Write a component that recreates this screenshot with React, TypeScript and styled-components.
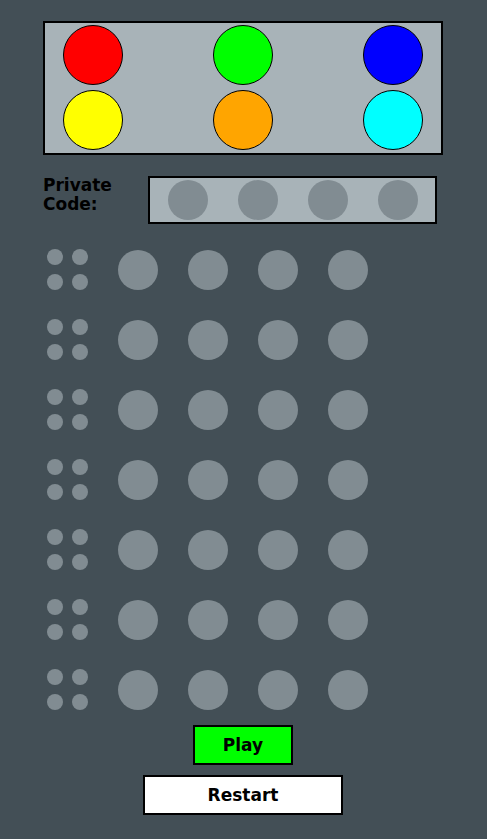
import { FC } from 'react';
import styled, { createGlobalStyle } from 'styled-components';

const colors = ['#ff0000', '#00ff00', '#0000ff', '#ffff00', '#ffa500', '#00ffff'];
const ROWS = 7;

const GlobalStyle = createGlobalStyle`
  html, body {
    margin: 0;
    padding: 0;
    background: #434f56;
    min-height: 100%;
  }
  body {
    font-family: 'DejaVu Sans', 'Liberation Sans', sans-serif;
  }
`;

const Board = styled.div`
  width: 400px;
  margin: 0 auto;
  padding: 21px 1px 24px 0;
  display: flex;
  flex-direction: column;
`;

const Palette = styled.div`
  box-sizing: border-box;
  height: 134px;
  border: 2px solid #000;
  background: #a8b3b8;
  padding: 2px 18px 3px;
  display: grid;
  grid-template-columns: repeat(3, 60px);
  grid-template-rows: repeat(2, 60px);
  justify-content: space-between;
  row-gap: 5px;
`;

const ColorPeg = styled.div<{ $color: string }>`
  box-sizing: border-box;
  width: 60px;
  height: 60px;
  border-radius: 50%;
  border: 1px solid #000;
  background: ${(p) => p.$color};
`;

const CodeRow = styled.div`
  display: flex;
  align-items: flex-start;
  margin-top: 21px;
`;

const Label = styled.div`
  width: 105px;
  font-size: 17px;
  font-weight: bold;
  line-height: 19px;
  color: #000;
`;

const CodeBox = styled.div`
  box-sizing: border-box;
  width: 289px;
  height: 48px;
  border: 2px solid #000;
  background: #a8b3b8;
  display: flex;
  align-items: center;
  justify-content: center;
  gap: 30px;
`;

const Hole = styled.div`
  width: 40px;
  height: 40px;
  border-radius: 50%;
  background: #818c92;
`;

const Rows = styled.div`
  display: flex;
  flex-direction: column;
  gap: 30px;
  margin-top: 26px;
`;

const GuessRow = styled.div`
  display: flex;
  align-items: center;
  gap: 30px;
  height: 40px;
  padding-left: 4px;
`;

const Hints = styled.div`
  display: grid;
  grid-template-columns: repeat(2, 16px);
  grid-template-rows: repeat(2, 16px);
  gap: 9px;
  margin-top: -1px;
`;

const HintPeg = styled.div`
  width: 16px;
  height: 16px;
  border-radius: 50%;
  background: #818c92;
`;

const Guesses = styled.div`
  display: flex;
  gap: 30px;
`;

const Button = styled.button<{ $width: number; $bg: string }>`
  box-sizing: border-box;
  align-self: center;
  width: ${(p) => p.$width}px;
  height: 40px;
  border: 2px solid #000;
  border-radius: 0;
  background: ${(p) => p.$bg};
  font-family: 'DejaVu Sans', 'Liberation Sans', sans-serif;
  font-size: 17px;
  font-weight: bold;
  color: #000;
  padding: 0;
  cursor: pointer;
`;

const PlayButton = styled(Button)`
  margin-top: 15px;
`;

const RestartButton = styled(Button)`
  margin-top: 10px;
`;

const App: FC = () => {
  return (
    <>
      <GlobalStyle />
      <Board>
        <Palette>
          {colors.map((c) => (
            <ColorPeg key={c} $color={c} />
          ))}
        </Palette>
        <CodeRow>
          <Label>
            Private
            <br />
            Code:
          </Label>
          <CodeBox>
            {[0, 1, 2, 3].map((i) => (
              <Hole key={i} />
            ))}
          </CodeBox>
        </CodeRow>
        <Rows>
          {Array.from({ length: ROWS }).map((_, r) => (
            <GuessRow key={r}>
              <Hints>
                {[0, 1, 2, 3].map((i) => (
                  <HintPeg key={i} />
                ))}
              </Hints>
              <Guesses>
                {[0, 1, 2, 3].map((i) => (
                  <Hole key={i} />
                ))}
              </Guesses>
            </GuessRow>
          ))}
        </Rows>
        <PlayButton $width={100} $bg='#00ff00'>
          Play
        </PlayButton>
        <RestartButton $width={200} $bg='#ffffff'>
          Restart
        </RestartButton>
      </Board>
    </>
  );
};

export default App;
